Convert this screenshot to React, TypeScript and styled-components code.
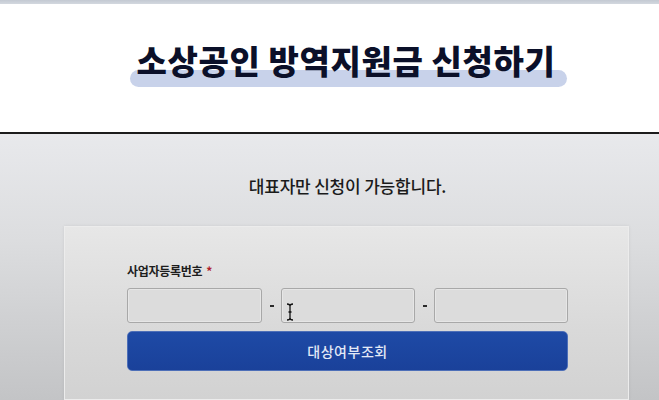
import React from "react";
import styled, { createGlobalStyle } from "styled-components";

const Global = createGlobalStyle`
  html, body { margin: 0; padding: 0; }
  body {
    width: 659px;
    height: 400px;
    overflow: hidden;
    font-family: "Noto Sans CJK KR", "Noto Sans", sans-serif;
    background: #c4c5c7;
  }
`;

const Page = styled.div`
  display: flex;
  flex-direction: column;
  height: 400px;
`;

const TopStrip = styled.div`
  height: 4px;
  background: linear-gradient(180deg, #c3c9d2, #d3d8df);
`;

const Header = styled.header`
  height: 130px;
  background: #ffffff;
  border-bottom: 2px solid #1c1c1c;
  display: flex;
  justify-content: center;
  padding-top: 35px;
  box-sizing: border-box;
`;

const TitleWrap = styled.div`
  position: relative;
  height: 50px;
  padding: 0 12px 0 7px;
  margin-left: 38px;
`;

const Highlight = styled.span`
  position: absolute;
  left: 0;
  right: 0;
  top: 31px;
  height: 17px;
  border-radius: 9px;
  background: #c8d2ea;
`;

const Title = styled.h1`
  position: relative;
  margin: 0;
  font-size: 33px;
  line-height: 42px;
  font-weight: 900;
  color: #0b1029;
  letter-spacing: 0.6px;
  white-space: nowrap;
`;

const Section = styled.main`
  flex: 1;
  background: linear-gradient(180deg, #e8e9ec 0%, #dcdddf 40%, #c3c4c6 100%);
  display: flex;
  flex-direction: column;
  align-items: flex-start;
  padding-top: 40px;
  overflow: hidden;
`;

const Notice = styled.p`
  margin: 0;
  align-self: center;
  padding-left: 36px;
  font-size: 17px;
  line-height: 24px;
  font-weight: 500;
  color: #1b1b1b;
  letter-spacing: -0.2px;
`;

const Card = styled.section`
  margin: 28px 0 0 64px;
  width: 565px;
  height: 200px;
  box-sizing: border-box;
  background: linear-gradient(180deg, #e7e7e7 0%, #d9d9d9 60%, #d2d2d2 100%);
  border: 1px solid #ececec;
  box-shadow: 0 0 3px rgba(0, 0, 0, 0.08);
  padding: 36px 0 0 62px;
  display: flex;
  flex-direction: column;
`;

const Label = styled.label`
  font-size: 12px;
  line-height: 16px;
  font-weight: 700;
  color: #1d1d1d;
  letter-spacing: -0.3px;
  margin-bottom: 9px;
`;

const Required = styled.span`
  color: #b0202a;
  margin-left: 4px;
`;

const FieldRow = styled.div`
  display: flex;
  align-items: center;
  width: 441px;
`;

const Input = styled.div<{ $w: number }>`
  position: relative;
  width: ${(p) => p.$w}px;
  height: 35px;
  box-sizing: border-box;
  border: 1px solid #a8a8a8;
  border-radius: 3px;
  background: #dcdcdc;
  box-shadow: inset 0 0 0 1px #e6e6e6;
`;

const Dash = styled.span`
  width: 19px;
  display: flex;
  justify-content: center;
  &::before {
    content: "";
    width: 4px;
    height: 2px;
    background: #2a2a2a;
  }
`;

const Cursor = styled.svg`
  position: absolute;
  left: 4px;
  top: 14px;
`;

const Button = styled.button`
  margin-top: 8px;
  width: 441px;
  height: 40px;
  border: 1px solid #4d6fb8;
  border-radius: 5px;
  background: linear-gradient(180deg, #1e4aa6 0%, #1a419a 100%);
  color: #e3e9f6;
  font-family: "Noto Sans CJK KR", "Noto Sans", sans-serif;
  font-size: 14px;
  font-weight: 500;
  letter-spacing: 0.5px;
  padding: 0;
`;

export default function App() {
  return (
    <>
      <Global />
      <Page>
        <TopStrip />
        <Header>
          <TitleWrap>
            <Highlight />
            <Title>소상공인 방역지원금 신청하기</Title>
          </TitleWrap>
        </Header>
        <Section>
          <Notice>대표자만 신청이 가능합니다.</Notice>
          <Card>
            <Label>
              사업자등록번호<Required>*</Required>
            </Label>
            <FieldRow>
              <Input $w={135} />
              <Dash aria-label="-" />
              <Input $w={134}>
                <Cursor width="8" height="18" viewBox="0 0 8 18">
                  <path
                    d="M1 1 C3 1 4 2 4 3 L4 15 C4 16 3 17 1 17 M7 1 C5 1 4 2 4 3 M4 15 C4 16 5 17 7 17 M2.5 9 L5.5 9"
                    stroke="#111"
                    strokeWidth="1.3"
                    fill="none"
                  />
                </Cursor>
              </Input>
              <Dash aria-label="-" />
              <Input $w={134} />
            </FieldRow>
            <Button>대상여부조회</Button>
          </Card>
        </Section>
      </Page>
    </>
  );
}
